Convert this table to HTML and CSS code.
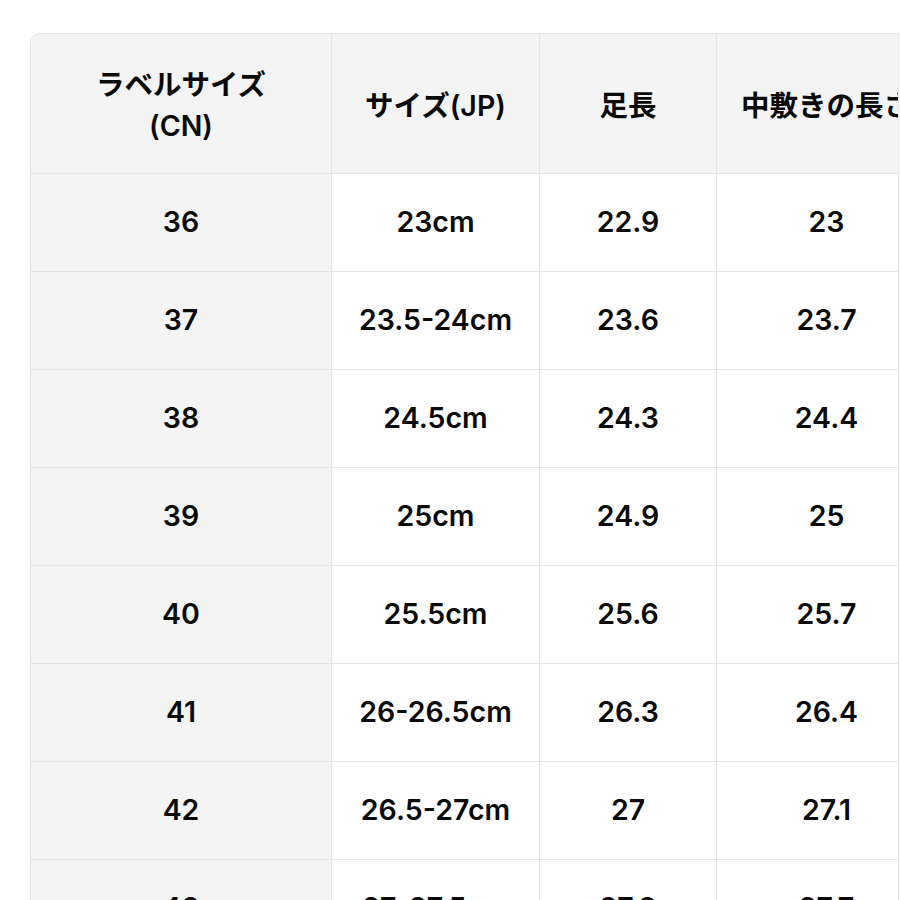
FILE: index.html
```html
<!DOCTYPE html>
<html lang="ja">
<head>
<meta charset="utf-8">
<link rel="stylesheet" href="styles.css">
</head>
<body>
<div class="sheet">
  <div class="grid">
    <div class="cell head first">ラベルサイズ<br>(CN)</div>
    <div class="cell head">サイズ(JP)</div>
    <div class="cell head">足長</div>
    <div class="cell head">中敷きの長さ</div>

    <div class="cell first">36</div><div class="cell">23cm</div><div class="cell">22.9</div><div class="cell">23</div>
    <div class="cell first">37</div><div class="cell">23.5-24cm</div><div class="cell">23.6</div><div class="cell">23.7</div>
    <div class="cell first">38</div><div class="cell">24.5cm</div><div class="cell">24.3</div><div class="cell">24.4</div>
    <div class="cell first">39</div><div class="cell">25cm</div><div class="cell">24.9</div><div class="cell">25</div>
    <div class="cell first">40</div><div class="cell">25.5cm</div><div class="cell">25.6</div><div class="cell">25.7</div>
    <div class="cell first">41</div><div class="cell">26-26.5cm</div><div class="cell">26.3</div><div class="cell">26.4</div>
    <div class="cell first">42</div><div class="cell">26.5-27cm</div><div class="cell">27</div><div class="cell">27.1</div>
    <div class="cell first">43</div><div class="cell">27-27.5cm</div><div class="cell">27.8</div><div class="cell">27.7</div>
  </div>
</div>
</body>
</html>
```

FILE: styles.css
```css
html, body {
  margin: 0;
  padding: 0;
  background: #ffffff;
}

body {
  font-family: "Inter", "Noto Sans CJK JP", sans-serif;
  color: #0a0a0a;
  overflow: hidden;
  height: 900px;
}

.sheet {
  margin: 33px 0 0 30px;
  width: 869px;
  border: 1px solid #e6e6e6;
  border-bottom: none;
  border-top-left-radius: 10px;
  overflow: hidden;
  box-sizing: border-box;
}

.grid {
  display: grid;
  grid-template-columns: 301px 208px 177px 220px;
  grid-template-rows: 140px;
  grid-auto-rows: 98px;
  width: 906px;
}

.cell {
  box-sizing: border-box;
  border-right: 1px solid #e6e6e6;
  border-bottom: 1px solid #e6e6e6;
  display: flex;
  align-items: center;
  justify-content: center;
  text-align: center;
  font-size: 28.5px;
  font-weight: 600;
  line-height: 41px;
  padding-bottom: 3px;
  white-space: nowrap;
}

.head {
  background: #f4f4f4;
  padding-top: 3px;
  padding-bottom: 0;
}

.first {
  background: #f4f4f4;
}
```
